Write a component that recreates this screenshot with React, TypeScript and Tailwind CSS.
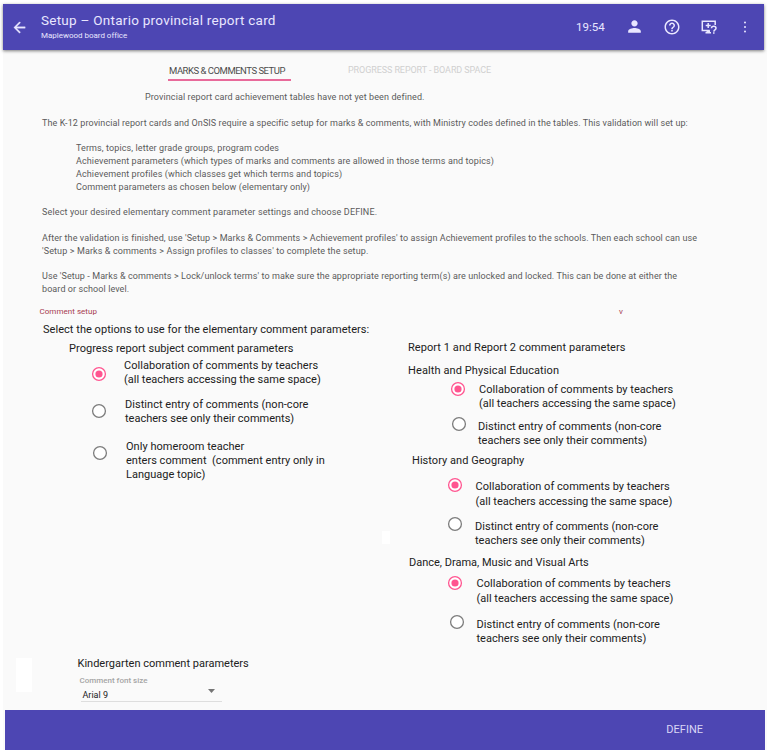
import { ReactNode } from "react";

type OptionProps = {
  name: string;
  checked?: boolean;
  rowClass: string;
  radioClass: string;
  textClass: string;
  lines: string[];
};

function Radio({ name, checked, className }: { name: string; checked?: boolean; className: string }) {
  return (
    <svg
      role="radio"
      aria-label={name}
      aria-checked={!!checked}
      viewBox="0 0 14 14"
      className={`size-3.5 shrink-0 overflow-visible ${checked ? "text-[#ff5590]" : "text-[#7c7c7c]"} ${className}`}
    >
      <circle cx="7" cy="7" r="6.400" fill="#fff" stroke="currentColor" strokeWidth="1.300" />
      {checked && <circle cx="7" cy="7" r="3.600" fill="currentColor" />}
    </svg>
  );
}

function Option({ name, checked, rowClass, radioClass, textClass, lines }: OptionProps) {
  return (
    <div className={`flex items-start ${rowClass}`}>
      <Radio name={name} checked={checked} className={radioClass} />
      <div className={`whitespace-pre ${textClass}`}>
        {lines.map((line) => (
          <p key={line} className="first:tracking-[0.040px]">
            {line}
          </p>
        ))}
      </div>
    </div>
  );
}

function Heading({ className, children }: { className: string; children: ReactNode }) {
  return <h3 className={`h-3.5 whitespace-nowrap leading-[14px] ${className}`}>{children}</h3>;
}

const collaboration = ["Collaboration of comments by teachers", "(all teachers accessing the same space)"];
const distinct = ["Distinct entry of comments (non-core", "teachers see only their comments)"];
const homeroom = ["Only homeroom teacher", "enters comment  (comment entry only in", "Language topic)"];

function Header() {
  return (
    <header className="ml-[3px] flex h-[46px] w-[761px] items-start bg-[#4d46b3] text-[#e9e7ff] shadow-[0_1px_3px_rgba(0,0,0,0.5)]">
      <svg viewBox="0 0 24 24" className="ml-2 mt-[15px] size-[17px]" fill="currentColor" stroke="currentColor" strokeWidth="0.500">
        <path d="M20 11H7.830l5.590-5.590L12 4l-8 8 8 8 1.410-1.410L7.830 13H20v-2z" />
      </svg>
      <div className="ml-[13px] w-[535px] whitespace-nowrap">
        <h1 className="mt-[7px] text-[13.500px] leading-[18px] tracking-[0.260px]">Setup – Ontario provincial report card</h1>
        <p className="mt-px text-[8px] leading-3 tracking-[-0.020px]">Maplewood board office</p>
      </div>
      <span className="mt-[14px] w-[30px] whitespace-nowrap text-[11.500px] leading-[18px]">19:54</span>
      <svg viewBox="0 0 24 24" className="ml-[19px] mt-[13px] size-[19px]" fill="currentColor">
        <path d="M12 12c2.210 0 4-1.790 4-4s-1.790-4-4-4-4 1.790-4 4 1.790 4 4 4zm0 2c-2.670 0-8 1.340-8 4v2h16v-2c0-2.660-5.330-4-8-4z" />
      </svg>
      <svg viewBox="0 0 24 24" className="ml-[19px] mt-[14px] size-[18px]" fill="currentColor">
        <path d="M11 18h2v-2h-2v2zm1-16C6.480 2 2 6.480 2 12s4.480 10 10 10 10-4.480 10-10S17.520 2 12 2zm0 18c-4.410 0-8-3.590-8-8s3.590-8 8-8 8 3.590 8 8-3.590 8-8 8zm0-14c-2.210 0-4 1.790-4 4h2c0-1.100.9-2 2-2s2 .9 2 2c0 2-3 1.750-3 5h2c0-2.250 3-2.500 3-5 0-2.210-1.790-4-4-4z" />
      </svg>
      <svg viewBox="0 0 16 14" className="ml-5 mt-4 h-3.5 w-4" fill="none" stroke="currentColor" strokeWidth="1.500">
        <path d="M14.200 5V1.200H1.300v9.300h7.500M4.500 12.700h5.500M7.200 3v5M4.700 5.500h5" />
        <path d="M5.500 10.500h3.500v2.200h-3.500z" fill="currentColor" stroke="none" />
        <path d="M10.500 8.200c0-2.800 4.500-2.600 4.500 0 0 1.700-2.100 1.500-2.200 3.400M12.800 12.300v1.500" />
      </svg>
      <svg viewBox="0 0 4 14" className="ml-[26px] mt-4 h-3.5 w-1" fill="currentColor">
        <circle cx="2" cy="2.500" r="1" />
        <circle cx="2" cy="7" r="1" />
        <circle cx="2" cy="11.500" r="1" />
      </svg>
    </header>
  );
}

export default function App() {
  return (
    <div className="relative h-[750px] w-[768px] overflow-hidden bg-white pt-1 font-[Roboto,'Liberation_Sans',sans-serif] text-[#212121]">
      <div className="absolute bottom-0 left-[3px] right-px top-[50px] bg-[#fafafa]" />
      <div className="absolute left-4 top-[658px] h-[34px] w-4 bg-white" />
      <div className="absolute left-[382px] top-[531px] h-[13px] w-2 bg-white" />

      <div className="relative">
        <Header />

        <nav className="ml-[168px] mt-[13px] flex h-[18px] whitespace-nowrap text-[9.500px] leading-[15px]">
          <span className="h-[18px] w-[123px] border-b-2 border-[#e86a9a] pl-px tracking-[-0.480px] text-[#4d4d4d]">MARKS &amp; COMMENTS SETUP</span>
          <span className="ml-[57px] text-[9px] leading-[14px] tracking-[-0.080px] text-[#d0d0d0]">PROGRESS REPORT - BOARD SPACE</span>
        </nav>

        <section className="ml-[42px] mt-[10px] whitespace-nowrap text-[9px] leading-[12.800px] tracking-[0.085px] text-[#5a5a5a]">
          <p className="ml-[103px] tracking-[0.105px]">Provincial report card achievement tables have not yet been defined.</p>
          <p className="mt-[12.800px]">
            The K-12 provincial report cards and OnSIS require a specific setup for marks &amp; comments, with Ministry codes defined in the tables. This validation will set up:
          </p>
          <ul className="ml-[34px] mt-[12.800px] tracking-[0.105px]">
            <li>Terms, topics, letter grade groups, program codes</li>
            <li>Achievement parameters (which types of marks and comments are allowed in those terms and topics)</li>
            <li>Achievement profiles (which classes get which terms and topics)</li>
            <li>Comment parameters as chosen below (elementary only)</li>
          </ul>
          <p className="mt-[12.800px] tracking-[0.140px]">Select your desired elementary comment parameter settings and choose DEFINE.</p>
          <p className="mt-[12.800px]">
            <span className="tracking-[0.092px]">
              After the validation is finished, use 'Setup &gt; Marks &amp; Comments &gt; Achievement profiles' to assign Achievement profiles to the schools. Then each school can use
            </span>
            <br />
            <span className="tracking-[0.120px]">'Setup &gt; Marks &amp; comments &gt; Assign profiles to classes' to complete the setup.</span>
          </p>
          <p className="mt-[12.800px]">
            Use 'Setup - Marks &amp; comments &gt; Lock/unlock terms' to make sure the appropriate reporting term(s) are unlocked and locked. This can be done at either the
            <br />
            board or school level.
          </p>
        </section>

        <div className="ml-[39.500px] mt-[9.900px] flex h-3 text-[8px] leading-3 text-[#a63a50]">
          <span className="w-[579.500px] tracking-[0.040px]">Comment setup</span>
          <span>v</span>
        </div>
        <h2 className="ml-[43px] mt-[5px] h-3.5 whitespace-nowrap text-[11px] leading-[14px] tracking-[0.040px]">
          Select the options to use for the elementary comment parameters:
        </h2>

        <div className="mt-1 flex h-[316px] text-[11px] leading-[14px]">
          <div className="w-[408px] shrink-0">
            <Heading className="ml-[69px] mt-px tracking-[0.040px]">Progress report subject comment parameters</Heading>
            <Option name="Progress collaboration" checked rowClass="ml-[92px] mt-[3px] h-[30px]" radioClass="mt-2" textClass="ml-[18px] leading-[14.500px]" lines={collaboration} />
            <Option name="Progress distinct" rowClass="ml-[92px] mt-[8px] h-[29px]" radioClass="mt-[7px]" textClass="ml-[19px] mt-px" lines={distinct} />
            <Option name="Progress homeroom" rowClass="ml-[92.500px] mt-[14px] h-[42px]" radioClass="mt-[6px]" textClass="ml-[19.500px] tracking-[0.020px]" lines={homeroom} />
          </div>
          <div>
            <Heading className="tracking-[0.060px]">Report 1 and Report 2 comment parameters</Heading>
            <Heading className="mt-[9px] tracking-[0.100px]">Health and Physical Education</Heading>
            <Option name="Health collaboration" checked rowClass="ml-[43px] mt-[5px] h-7" radioClass="-mt-px" textClass="ml-3.5" lines={collaboration} />
            <Option name="Health distinct" rowClass="ml-[43.500px] mt-[7px] h-[30px]" radioClass="-mt-px" textClass="ml-[12.500px] mt-[2px]" lines={distinct} />
            <Heading className="ml-1 mt-[6px] tracking-[0.040px]">History and Geography</Heading>
            <Option name="History collaboration" checked rowClass="ml-[39.500px] mt-[11px] h-[30px]" radioClass="-mt-px" textClass="ml-3.5 leading-[15px]" lines={collaboration} />
            <Option name="History distinct" rowClass="ml-10 mt-[9px] h-[30px]" radioClass="-mt-px" textClass="ml-[13px] mt-[2px] tracking-[0.020px]" lines={distinct} />
            <Heading className="ml-px mt-[8px]">Dance, Drama, Music and Visual Arts</Heading>
            <Option name="Arts collaboration" checked rowClass="ml-10 mt-[6px] h-[30px]" radioClass="" textClass="ml-[14.500px] leading-[15px]" lines={collaboration} />
            <Option name="Arts distinct" rowClass="ml-[42px] mt-[9px] h-[30px]" radioClass="" textClass="ml-[12.500px] mt-[3px] tracking-[0.020px]" lines={distinct} />
          </div>
        </div>

        <section className="ml-[77.500px] h-[53.500px]">
          <Heading className="text-[11px]">Kindergarten comment parameters</Heading>
          <p className="ml-[2px] mt-[4px] text-[8px] font-medium leading-3 text-[#a5a5a5]">Comment font size</p>
          <div className="ml-[3.500px] mt-0.5 flex h-[13px] w-[141px] justify-between border-b border-[#dedede] pl-[1.500px] pr-[7px] text-[9px] leading-[13px]">
            <span>Arial 9</span>
            <svg viewBox="0 0 7 4" className="h-1 w-[7px]" fill="#757575">
              <path d="M0 0h7L3.500 4z" />
            </svg>
          </div>
        </section>

        <footer className="ml-[5px] flex h-10 w-[760px] justify-end bg-[#4d46b3] pr-[62px] text-[11px] leading-10 text-[#d9d6f5]">
          DEFINE
        </footer>
      </div>
    </div>
  );
}
